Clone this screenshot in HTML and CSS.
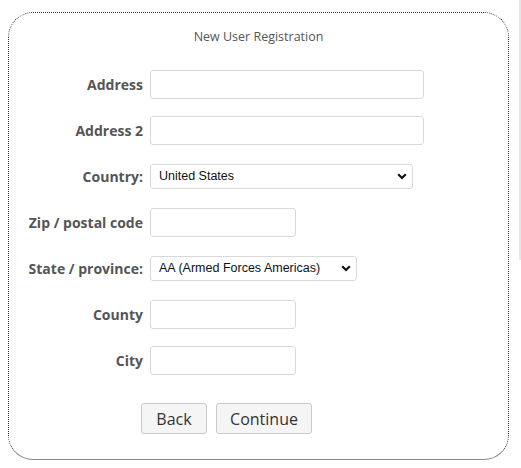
FILE: index.html
```html
<!DOCTYPE html>
<html>
<head>
<meta charset="utf-8">
<link rel="stylesheet" href="styles.css">
</head>
<body>
<div class="panel">
  <div class="title">New User Registration</div>
  <form class="form">
    <label class="label">Address</label>
    <div class="field"><input class="input wide" type="text"></div>
    <label class="label">Address 2</label>
    <div class="field"><input class="input wide" type="text"></div>
    <label class="label">Country:</label>
    <div class="field">
      <div class="select-wrap country">
        <select class="select"><option>United States</option></select>
        <svg class="chev" width="10" height="7" viewBox="0 0 10 7"><path d="M1.2 1.2 L5 5 L8.8 1.2" fill="none" stroke="#111" stroke-width="2.2"/></svg>
      </div>
    </div>
    <label class="label">Zip / postal code</label>
    <div class="field"><input class="input short" type="text"></div>
    <label class="label">State / province:</label>
    <div class="field">
      <div class="select-wrap state">
        <select class="select"><option>AA (Armed Forces Americas)</option></select>
        <svg class="chev" width="10" height="7" viewBox="0 0 10 7"><path d="M1.2 1.2 L5 5 L8.8 1.2" fill="none" stroke="#111" stroke-width="2.2"/></svg>
      </div>
    </div>
    <label class="label">County</label>
    <div class="field"><input class="input short" type="text"></div>
    <label class="label">City</label>
    <div class="field"><input class="input short" type="text"></div>
  </form>
  <div class="actions">
    <button class="btn back" type="button">Back</button>
    <button class="btn cont" type="button">Continue</button>
  </div>
</div>
<div class="scroll-edge"></div>
</body>
</html>
```
FILE: styles.css
```css
html, body {
  margin: 0;
  padding: 0;
  background: #fff;
}
body {
  padding: 12px 0 0 8px;
  font-family: "Open Sans", "DejaVu Sans", sans-serif;
  color: #555;
}
.panel {
  box-sizing: border-box;
  width: 501px;
  height: 448px;
  border: 1px dotted #333;
  border-bottom: 1px solid #888;
  border-radius: 25px;
  padding: 15px 0 0 12px;
}
.title {
  font-size: 12.5px;
  line-height: 18px;
  text-align: center;
  padding-right: 12px;
  color: #555;
}
.form {
  margin: 15px 0 0 0;
  display: grid;
  grid-template-columns: 122px auto;
  grid-auto-rows: 46px;
  column-gap: 7px;
}
.label {
  font-size: 14px;
  font-weight: 700;
  color: #555;
  display: flex;
  align-items: center;
  justify-content: flex-end;
  white-space: nowrap;
  padding-top: 1px;
}
.field {
  display: flex;
  align-items: center;
}
.input {
  box-sizing: border-box;
  height: 29px;
  border: 1px solid #d9d9d9;
  border-radius: 3px;
  margin: 0;
  padding: 0 6px;
  background: #fff;
}
.wide { width: 274px; }
.short { width: 146px; }
.select-wrap {
  position: relative;
  display: flex;
}
.country { width: 263px; }
.state { width: 207px; }
.select {
  appearance: none;
  -webkit-appearance: none;
  box-sizing: border-box;
  width: 100%;
  height: 25px;
  border: 1px solid #d9d9d9;
  border-radius: 3px;
  margin: 0;
  padding: 0 0 0 8px;
  background: #fff;
  font-family: "Liberation Sans", Arial, sans-serif;
  font-size: 12.5px;
  color: #111;
}
.chev {
  position: absolute;
  right: 6px;
  top: 9px;
  pointer-events: none;
}
.actions {
  display: flex;
  gap: 9px;
  margin: 20px 0 0 120px;
}
.btn {
  box-sizing: border-box;
  height: 31px;
  border: 1px solid #c9c9c9;
  border-radius: 3px;
  background: #f5f5f5;
  font-family: "Open Sans", "DejaVu Sans", sans-serif;
  font-size: 16px;
  color: #333;
  padding: 0;
  margin: 0;
}
.back { width: 66px; }
.cont { width: 96px; }
.scroll-edge {
  position: absolute;
  top: 0;
  right: 0;
  width: 2px;
  height: 260px;
  background: #e6e6e6;
}
```
